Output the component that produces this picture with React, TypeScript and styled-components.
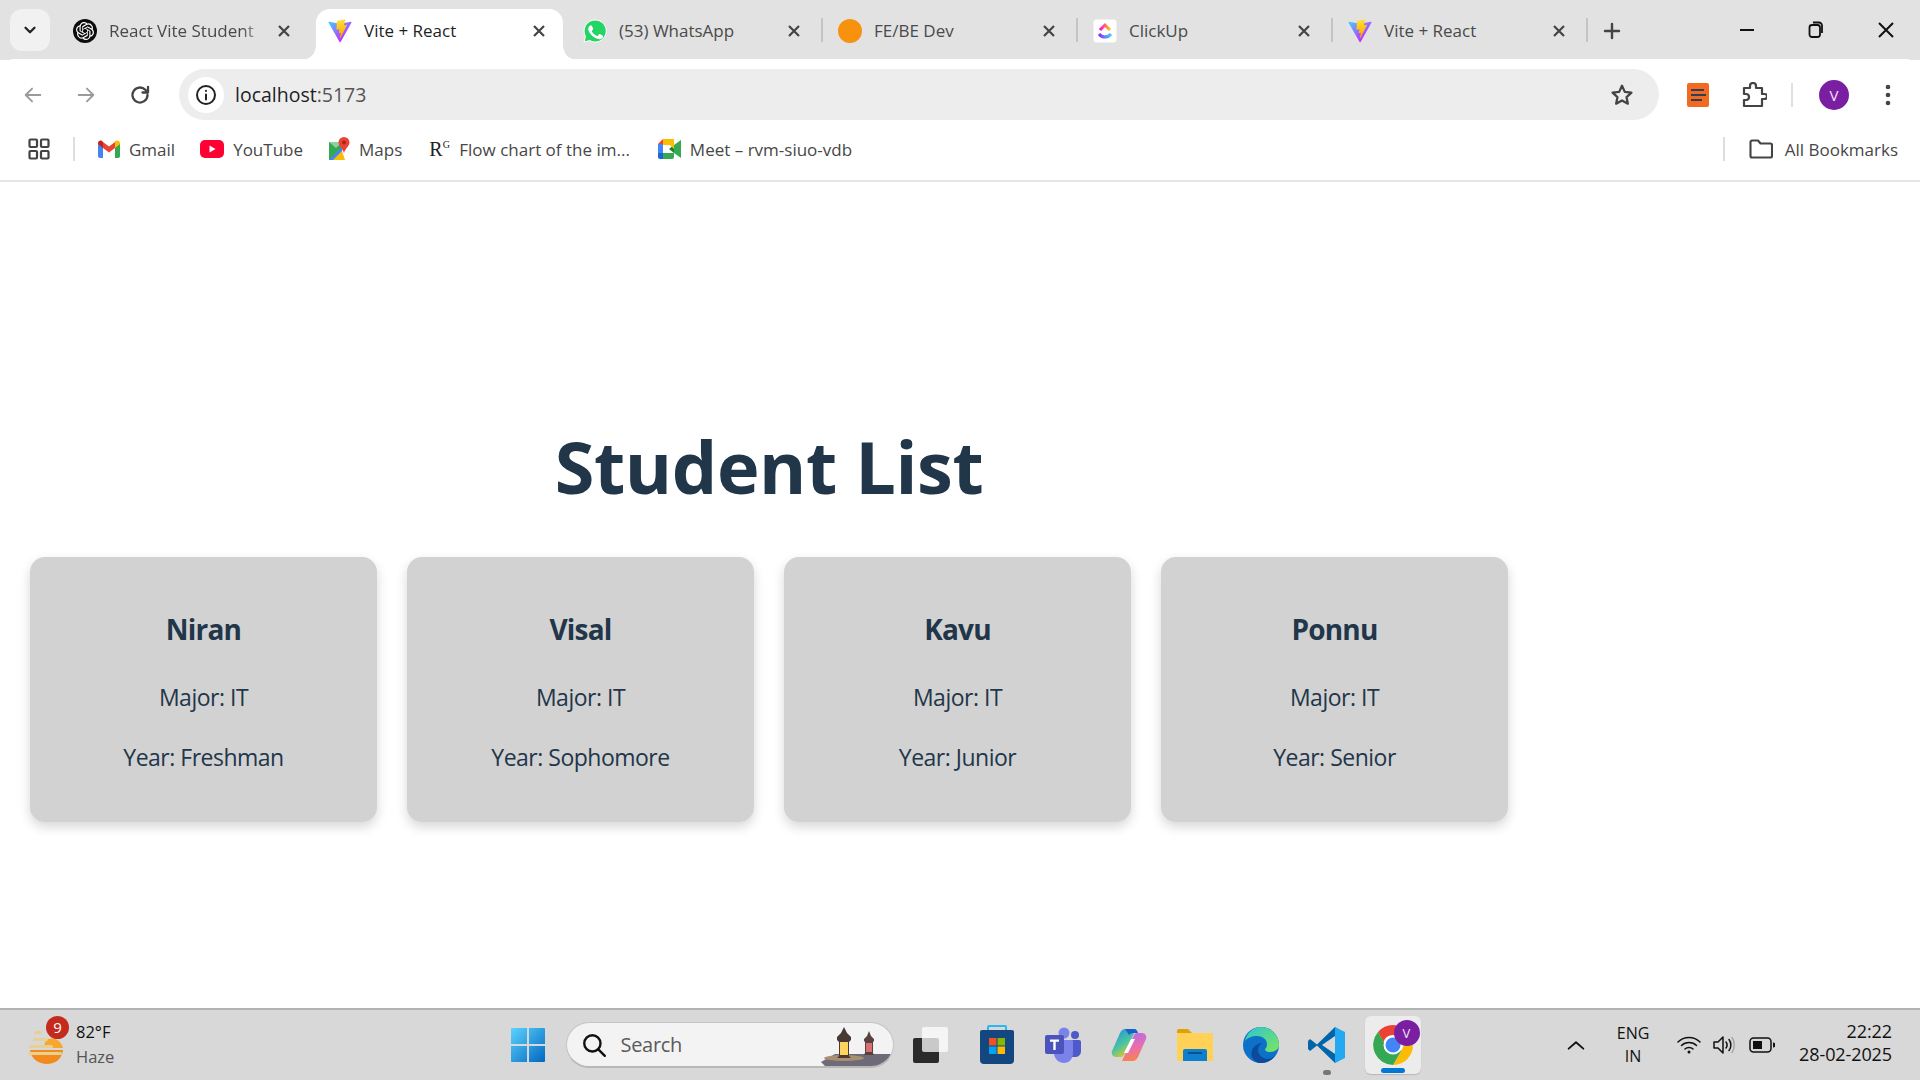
import React from "react";
import styled, { createGlobalStyle } from "styled-components";
import { SiOpenai } from "react-icons/si";

const UI = `"Open Sans", "Noto Sans", "Liberation Sans", sans-serif`;

const Global = createGlobalStyle`
  html, body { margin: 0; padding: 0; width: 1920px; height: 1080px; overflow: hidden; background: #fff; }
  #root { width: 1920px; height: 1080px; }
  * { box-sizing: border-box; }
`;

const Screen = styled.div`
  width: 1920px;
  height: 1080px;
  display: flex;
  flex-direction: column;
  font-family: ${UI};
`;

/* ---------- tab strip ---------- */
const TabStrip = styled.div`
  height: 60px;
  flex: none;
  background: #e2e2e2;
  display: flex;
  align-items: flex-end;
  padding-left: 10px;
`;
const TabMenu = styled.div`
  width: 40px;
  height: 42px;
  margin: 0 0 9px 0;
  border-radius: 12px;
  background: #f1f1f1;
  display: flex;
  align-items: center;
  justify-content: center;
  flex: none;
`;
const TabList = styled.div`
  display: flex;
  align-items: flex-end;
  margin-left: 6px;
`;
const Tab = styled.div<{ $active?: boolean; $sep?: boolean }>`
  position: relative;
  isolation: isolate;
  width: 255px;
  height: 51px;
  flex: none;
  display: flex;
  align-items: center;
  padding: 0 18px 8px 17px;
  gap: 12px;
  font-size: 17px;
  color: ${(p) => (p.$active ? "#1f1f1f" : "#4a4a4a")};
  ${(p) =>
    p.$active
      ? `
    &::before {
      content: ""; position: absolute; z-index: -1; left: 5px; right: 3px; top: 0; bottom: 0;
      background: #fff; border-radius: 14px 14px 0 0;
    }
    &::after {
      content: ""; position: absolute; z-index: -1; left: -9px; right: -11px; bottom: 0; height: 14px;
      background:
        radial-gradient(circle at 0 0, transparent 13.5px, #fff 14px) left bottom / 14px 14px no-repeat,
        radial-gradient(circle at 100% 0, transparent 13.5px, #fff 14px) right bottom / 14px 14px no-repeat;
    }`
      : ""}
  ${(p) =>
    p.$sep
      ? `&::after { content: ""; position: absolute; right: -2px; top: 9px; width: 2px; height: 24px; background: #c4c4c4; }`
      : ""}
`;
const TabTitle = styled.span`
  flex: 1;
  min-width: 0;
  white-space: nowrap;
`;
const FadedTitle = styled(TabTitle)`
  -webkit-mask-image: linear-gradient(to right, #000 86%, rgba(0, 0, 0, 0.25));
  mask-image: linear-gradient(to right, #000 86%, rgba(0, 0, 0, 0.25));
`;
const Favicon = styled.span`
  width: 24px;
  height: 24px;
  flex: none;
  display: flex;
  align-items: center;
  justify-content: center;
`;
const ChatBadge = styled(Favicon)`
  border-radius: 50%;
  background: #0c0c0c;
`;
const NewTab = styled.div`
  width: 24px;
  height: 24px;
  margin: 0 0 17px 14px;
  flex: none;
  display: flex;
`;
const WindowButtons = styled.div`
  margin-left: auto;
  display: flex;
  align-items: center;
  height: 60px;
  padding-right: 25px;
  gap: 53px;
`;

/* ---------- toolbar ---------- */
const Toolbar = styled.div`
  height: 62px;
  flex: none;
  display: flex;
  align-items: center;
  padding: 9px 0 0 22px;
  background: #fff;
  border-radius: 14px 14px 0 0;
  margin-top: -1px;
  position: relative;
`;
const NavButtons = styled.div`
  display: flex;
  align-items: center;
  gap: 31px;
  flex: none;
`;
const Omnibox = styled.div`
  margin-left: 27px;
  width: 1480px;
  height: 51px;
  flex: none;
  border-radius: 26px;
  background: #eeedee;
  display: flex;
  align-items: center;
  padding: 0 24px 0 9px;
`;
const SiteInfo = styled.span`
  width: 36px;
  height: 36px;
  border-radius: 50%;
  background: #fff;
  display: flex;
  align-items: center;
  justify-content: center;
  flex: none;
`;
const Url = styled.span`
  margin-left: 11px;
  flex: 1;
  font-size: 19.5px;
  color: #1f1f1f;
`;
const UrlPort = styled.span`
  color: #555;
`;
const ToolIcons = styled.div`
  display: flex;
  align-items: center;
  margin-left: 27px;
`;
const ToolSep = styled.span`
  width: 2px;
  height: 24px;
  background: #e0e0e0;
  margin: 0 26px 0 24px;
`;
const Avatar = styled.span<{ $size: number; $font: number }>`
  width: ${(p) => p.$size}px;
  height: ${(p) => p.$size}px;
  border-radius: 50%;
  background: #7b1fa2;
  color: #efe3f5;
  font-size: ${(p) => p.$font}px;
  display: flex;
  align-items: center;
  justify-content: center;
  flex: none;
`;

/* ---------- bookmarks ---------- */
const Bookmarks = styled.div`
  height: 61px;
  flex: none;
  display: flex;
  align-items: center;
  padding: 0 22px 3px 28px;
  background: #fff;
  border-bottom: 2px solid #e6e6e6;
`;
const BarSep = styled.span<{ $right: number }>`
  width: 2px;
  height: 24px;
  background: #dedede;
  flex: none;
  margin: 0 ${(p) => p.$right}px 0 23px;
`;
const Mark = styled.span<{ $gap: number; $inner?: number }>`
  display: flex;
  align-items: center;
  gap: ${(p) => p.$inner ?? 9}px;
  margin-right: ${(p) => p.$gap}px;
  font-size: 17px;
  color: #474747;
  white-space: nowrap;
`;
const MarkSpacer = styled.span`
  flex: 1;
`;
const RMark = styled.span`
  font-family: "Liberation Serif", serif;
  font-size: 20px;
  color: #222;
  width: 21px;
  line-height: 1;
  display: block;
  white-space: nowrap;
`;
const RSup = styled.sup`
  font-size: 10px;
  line-height: 0;
`;

/* ---------- page ---------- */
const Page = styled.main`
  flex: 1;
  min-height: 0;
  background: #fff;
  display: flex;
  align-items: center;
`;
const Content = styled.div`
  padding: 30px;
`;
const Title = styled.h1`
  margin: 55px 0 48px;
  font-size: 72px;
  line-height: 86px;
  font-weight: 700;
  text-align: center;
  letter-spacing: -0.4px;
  color: #22364a;
`;
const CardRow = styled.div`
  display: grid;
  grid-template-columns: repeat(4, 347px);
  gap: 30px;
`;
const Card = styled.article`
  height: 265px;
  padding: 24px;
  background: #d2d2d2;
  border-radius: 15px;
  box-shadow: 0 5px 12px rgba(0, 0, 0, 0.16);
  text-align: center;
  color: #22364a;
`;
const Name = styled.h3`
  margin: 30px 0 32px;
  font-size: 28px;
  line-height: 36px;
  font-weight: 700;
  letter-spacing: -0.8px;
`;
const Info = styled.p`
  margin: 0 0 24px;
  font-size: 23px;
  line-height: 36px;
  letter-spacing: -0.5px;
`;

/* ---------- taskbar ---------- */
const Taskbar = styled.footer`
  height: 72px;
  flex: none;
  background: #d8d8d8;
  border-top: 2px solid #b2b2b2;
  display: grid;
  grid-template-columns: 1fr auto 1fr;
  align-items: center;
`;
const Weather = styled.div`
  display: flex;
  align-items: center;
  padding-left: 28px;
  position: relative;
`;
const WeatherIcon = styled.div`
  width: 36px;
  height: 44px;
  flex: none;
  margin-top: 4px;
`;
const Badge = styled.span`
  position: absolute;
  left: 46px;
  top: -3px;
  width: 23px;
  height: 23px;
  border-radius: 50%;
  background: #c42b1c;
  color: #fff;
  font-size: 15px;
  display: flex;
  align-items: center;
  justify-content: center;
`;
const WeatherText = styled.div`
  margin-left: 12px;
  padding-bottom: 3px;
  font-size: 16.5px;
  line-height: 25px;
  color: #111;
`;
const Muted = styled.div`
  color: #555;
`;
const Center = styled.div`
  display: flex;
  align-items: center;
  padding-left: 15px;
`;
const WinLogo = styled.div`
  width: 36px;
  height: 36px;
  margin-right: 20px;
`;
const SearchBox = styled.div`
  width: 328px;
  height: 46px;
  border-radius: 23px;
  background: #f3f3f3;
  border: 1px solid #c4c4c4;
  border-bottom: 2px solid #b8b8b8;
  display: flex;
  align-items: center;
  padding-left: 14px;
  gap: 14px;
  font-size: 20px;
  letter-spacing: -0.3px;
  color: #5a5a5a;
  position: relative;
  overflow: hidden;
`;
const SearchArt = styled.span`
  position: absolute;
  right: 0;
  bottom: 0;
  display: flex;
`;
const AppIcons = styled.div`
  display: flex;
  margin-left: 4px;
`;
const AppSlot = styled.div<{ $active?: boolean }>`
  width: 66px;
  height: 58px;
  display: flex;
  align-items: center;
  justify-content: center;
  position: relative;
  border-radius: 6px;
  ${(p) =>
    p.$active
      ? `background: #ececec; width: 56px; margin: 0 5px; box-shadow: 0 1px 1px #b8b8b8;`
      : ""}
`;
const RunDot = styled.span`
  position: absolute;
  bottom: -1px;
  left: 50%;
  margin-left: -4px;
  width: 8px;
  height: 5px;
  border-radius: 3px;
  background: #777;
`;
const ActiveBar = styled.span`
  position: absolute;
  bottom: 1px;
  left: 50%;
  margin-left: -12px;
  width: 24px;
  height: 5px;
  border-radius: 3px;
  background: #0078d4;
`;
const AvatarBadge = styled.span`
  position: absolute;
  top: 4px;
  right: 1px;
`;
const Tray = styled.div`
  display: flex;
  align-items: center;
  justify-content: flex-end;
  padding-right: 28px;
  color: #111;
`;
const TrayLang = styled.div`
  width: 44px;
  margin: 0 22px 0 24px;
  text-align: center;
  font-size: 16px;
  line-height: 23px;
`;
const TrayIcons = styled.div`
  display: flex;
  align-items: center;
  gap: 12px;
`;
const Clock = styled.div`
  margin-left: 24px;
  padding-bottom: 4px;
  text-align: right;
  font-size: 18px;
  line-height: 23px;
  letter-spacing: -0.1px;
`;

/* ---------- icons ---------- */
const Stroke = ({ s, w = 2, c = "#444", children }: { s: number; w?: number; c?: string; children: React.ReactNode }) => (
  <svg width={s} height={s} viewBox="0 0 24 24" fill="none" stroke={c} strokeWidth={w} strokeLinecap="round" strokeLinejoin="round">
    {children}
  </svg>
);
const Close = ({ s = 18 }: { s?: number }) => (
  <svg width={s} height={s} viewBox="0 0 18 18" fill="none" stroke="#444" strokeWidth="2.2" style={{ flex: "none" }}>
    <path d="M4 4l10 10M14 4L4 14" />
  </svg>
);
const Vite = () => (
  <svg width="26" height="26" viewBox="0 0 410 404">
    <defs>
      <linearGradient id="vg1" x1="6" y1="33" x2="235" y2="344" gradientUnits="userSpaceOnUse">
        <stop offset="0" stopColor="#41d1ff" />
        <stop offset="1" stopColor="#bd34fe" />
      </linearGradient>
      <linearGradient id="vg2" x1="194" y1="8" x2="236" y2="292" gradientUnits="userSpaceOnUse">
        <stop offset="0" stopColor="#ffea83" />
        <stop offset="0.08" stopColor="#ffdd35" />
        <stop offset="1" stopColor="#ffa800" />
      </linearGradient>
    </defs>
    <path d="M399.641 59.5246L215.643 388.545C211.844 395.338 202.084 395.378 198.228 388.618L10.5817 59.5563C6.38087 52.1896 12.6802 43.2665 21.0281 44.7586L205.223 77.6824C206.398 77.8924 207.601 77.8904 208.776 77.6763L389.119 44.8058C397.439 43.2894 403.768 52.1434 399.641 59.5246Z" fill="url(#vg1)" />
    <path d="M292.965 1.5744L156.801 28.2552C154.563 28.6937 152.906 30.5903 152.771 32.8664L144.395 174.33C144.198 177.662 147.258 180.248 150.51 179.498L188.42 170.749C191.967 169.931 195.172 173.055 194.443 176.622L183.18 231.775C182.422 235.487 185.907 238.661 189.532 237.56L212.947 230.446C216.577 229.344 220.065 232.527 219.297 236.242L201.398 322.875C200.278 328.294 207.486 331.249 210.492 326.603L212.5 323.5L323.454 102.072C325.312 98.3645 322.108 94.137 318.036 94.9228L279.014 102.454C275.347 103.161 272.227 99.746 273.262 96.1583L298.731 7.86689C299.767 4.27314 296.636 0.855181 292.965 1.5744Z" fill="url(#vg2)" />
  </svg>
);
const WhatsApp = () => (
  <svg width="24" height="24" viewBox="0 0 24 24">
    <path d="M12 1a11 11 0 0 0-9.500 16.500L1 23l5.700-1.500A11 11 0 1 0 12 1z" fill="#25d366" stroke="#fff" strokeWidth="1" />
    <path d="M9 7c-.3-.6-.5-.6-.8-.6h-.7c-.3 0-.7.100-1 .5-.4.400-1.300 1.300-1.300 3.100s1.300 3.500 1.500 3.800c.2.200 2.600 4.100 6.300 5.500 3.100 1.200 3.800 1 4.400.9.700-.1 2.200-.9 2.500-1.700.3-.9.300-1.600.2-1.700-.1-.2-.3-.3-.7-.4l-2.600-1.300c-.3-.1-.6-.2-.8.200l-1.200 1.500c-.2.200-.4.300-.8.100-.4-.2-1.600-.6-3-1.900-1.100-1-1.900-2.200-2.100-2.600-.2-.4 0-.6.200-.8l.6-.7c.2-.2.200-.4.400-.6.100-.300 0-.5 0-.7z" fill="#fff" />
  </svg>
);
const ClickUp = () => (
  <svg width="24" height="24" viewBox="0 0 24 24">
    <defs>
      <linearGradient id="cu1" x1="0" y1="0" x2="1" y2="0">
        <stop offset="0" stopColor="#ff02f0" />
        <stop offset="1" stopColor="#ffc800" />
      </linearGradient>
      <linearGradient id="cu2" x1="0" y1="0" x2="1" y2="0">
        <stop offset="0" stopColor="#8930fd" />
        <stop offset="1" stopColor="#49ccf9" />
      </linearGradient>
    </defs>
    <rect x="0.5" y="0.5" width="23" height="23" rx="3" fill="#fff" />
    <path d="M7 11l5-5 5 5" fill="none" stroke="url(#cu1)" strokeWidth="3" />
    <path d="M6 15c3 4 9 4 12 0" fill="none" stroke="url(#cu2)" strokeWidth="3" />
  </svg>
);
const Gmail = () => (
  <svg width="22" height="18" viewBox="0 0 22 18">
    <path d="M0 3v13a2 2 0 0 0 2 2h3V7z" fill="#4285f4" />
    <path d="M22 3v13a2 2 0 0 1-2 2h-3V7z" fill="#34a853" />
    <path d="M17 1v7l5-4V3c0-2-2.500-3-4-2z" fill="#fbbc04" />
    <path d="M5 8V2l6 4.500L17 2v6l-6 4.500z" fill="#ea4335" />
    <path d="M0 4V3c0-2 2.500-3 4-2l1 1v6z" fill="#c5221f" />
  </svg>
);
const YouTube = () => (
  <svg width="24" height="18" viewBox="0 0 24 18">
    <rect width="24" height="18" rx="5" fill="#ff0033" />
    <path d="M9.500 5.500v7l6-3.500z" fill="#fff" />
  </svg>
);
const Maps = () => (
  <svg width="22" height="24" viewBox="0 0 22 24">
    <path d="M1 5h13v18H1z" fill="#34a853" />
    <path d="M1 23L14 10v13z" fill="#4285f4" />
    <path d="M1 5l13 0-6 6z" fill="#8fd19e" />
    <path d="M5 23l9-9 3 9z" fill="#fbbc04" />
    <path d="M16 0a5.500 5.500 0 0 1 5.500 5.500C21.500 9 17 12 16 16c-1-4-5.500-7-5.500-10.500A5.500 5.500 0 0 1 16 0z" fill="#ea4335" />
    <circle cx="16" cy="5.500" r="2" fill="#a52714" />
  </svg>
);
const Meet = () => (
  <svg width="23" height="20" viewBox="0 0 23 20">
    <path d="M5 0h11v6H5z" fill="#fbbc04" />
    <path d="M5 0L0 5h5z" fill="#ea4335" />
    <path d="M0 5h5v9H0z" fill="#4285f4" />
    <path d="M0 14h5v6H2a2 2 0 0 1-2-2z" fill="#1967d2" />
    <path d="M5 14h11v4a2 2 0 0 1-2 2H5z" fill="#34a853" />
    <path d="M16 6l7-5v18l-7-5z" fill="#34a853" />
    <path d="M11 10l5-4v8z" fill="#188038" />
    <path d="M12 6h4v4z" fill="#fbbc04" />
  </svg>
);
const WeatherArt = () => (
  <svg width="36" height="44" viewBox="0 0 36 44">
    <path d="M2 25h33c-1 9-8 14-16 14S3 34 2 25z" fill="#f28a1c" />
    <path d="M20 14c6-2 13 1 15 9H16c0-4 1-7 4-9z" fill="#f6a72c" />
    <g fill="#e8cf92">
      <rect x="6" y="6" width="8" height="3" rx="1.500" />
      <rect x="5" y="13" width="15" height="3" rx="1.500" />
      <rect x="1" y="20" width="24" height="3" rx="1.500" />
      <rect x="0" y="27" width="34" height="3" rx="1.500" />
    </g>
  </svg>
);
const Windows = () => (
  <svg width="36" height="36" viewBox="0 0 36 36">
    <defs>
      <linearGradient id="wg" x1="0" y1="0" x2="1" y2="1">
        <stop offset="0" stopColor="#5dd3ff" />
        <stop offset="1" stopColor="#0067c0" />
      </linearGradient>
    </defs>
    <path d="M1 2a1 1 0 0 1 1-1h15v16H1zM19 1h15a1 1 0 0 1 1 1v15H19zM1 19h16v16H2a1 1 0 0 1-1-1zM19 19h16v15a1 1 0 0 1-1 1H19z" fill="url(#wg)" />
  </svg>
);
const Lanterns = () => (
  <svg width="74" height="44" viewBox="0 0 74 44">
    <path d="M2 40l14-8h58v1c-2 5-5 9-9 11H6z" fill="#6f6a78" />
    <ellipse cx="25" cy="36" rx="20" ry="3" fill="#a89070" />
    <path d="M25 5l3 6 4 4v3l-2 2v14l2 2H18l2-2V20l-2-2v-3l4-4z" fill="#463a33" />
    <rect x="21" y="20" width="8" height="13" fill="#ffd45c" />
    <path d="M50 9l2 5 3 3v2l-1 1v11l1 2H45l1-2V20l-1-1v-2l3-3z" fill="#5b4040" />
    <rect x="47" y="21" width="6" height="9" fill="#d97070" />
  </svg>
);
const TaskView = () => (
  <svg width="36" height="36" viewBox="0 0 36 36">
    <rect x="0" y="11" width="26" height="25" rx="2" fill="#2a2a2a" />
    <rect x="9" y="0" width="26" height="25" rx="2" fill="#ffffff" opacity="0.75" />
  </svg>
);
const Store = () => (
  <svg width="36" height="40" viewBox="0 0 36 40">
    <path d="M9 6V2a1 1 0 0 1 1-1h16a1 1 0 0 1 1 1v4" fill="none" stroke="#2bb7ef" strokeWidth="2" />
    <path d="M3 5h30a2 2 0 0 1 2 2v28a4 4 0 0 1-4 4H5a4 4 0 0 1-4-4V7a2 2 0 0 1 2-2z" fill="#14477f" />
    <rect x="10" y="13" width="7.500" height="7.500" fill="#f25022" />
    <rect x="18.500" y="13" width="7.500" height="7.500" fill="#7fba00" />
    <rect x="10" y="21.500" width="7.500" height="7.500" fill="#00a4ef" />
    <rect x="18.500" y="21.500" width="7.500" height="7.500" fill="#ffb900" />
  </svg>
);
const Teams = () => (
  <svg width="36" height="36" viewBox="0 0 36 36">
    <circle cx="19" cy="6" r="5.500" fill="#7b83eb" />
    <circle cx="30" cy="8" r="4" fill="#5059c9" />
    <path d="M24 13h10a2 2 0 0 1 2 2v9c0 4-3 6-6 6h-6z" fill="#5059c9" />
    <path d="M9 13h18a1 1 0 0 1 1 1v12c0 6-4 10-9 10s-10-4-10-10z" fill="#7b83eb" />
    <rect x="0" y="8" width="19" height="19" rx="2" fill="#4b53bc" />
    <path d="M5 12.500h9v2.200h-3.300V23H8.300v-8.300H5z" fill="#fff" />
  </svg>
);
const Copilot = () => (
  <svg width="36" height="36" viewBox="0 0 36 36">
    <defs>
      <linearGradient id="cp1" x1="0" y1="0" x2="0.6" y2="1">
        <stop offset="0" stopColor="#1b8fe8" />
        <stop offset="0.6" stopColor="#4dc4a0" />
        <stop offset="1" stopColor="#f2c613" />
      </linearGradient>
      <linearGradient id="cp2" x1="0.4" y1="0" x2="0.6" y2="1">
        <stop offset="0" stopColor="#b76ce8" />
        <stop offset="0.6" stopColor="#f06fa0" />
        <stop offset="1" stopColor="#f5873f" />
      </linearGradient>
    </defs>
    <path d="M14 2h11L13 28c-1 2-3 2-5 2H5c-3 0-5-3-4-6L9 6c1-2 3-4 5-4z" fill="url(#cp1)" />
    <path d="M22 34H11l12-26c1-2 3-2 5-2h3c3 0 5 3 4 6l-8 18c-1 2-3 4-5 4z" fill="url(#cp2)" />
    <path d="M14 2h9c2 0 3 1 4 4H22c-2 0-3 1-4 2z" fill="#1a5fd0" />
    <path d="M20 12h4l-7 14h-4z" fill="#fff" />
  </svg>
);
const Folder = () => (
  <svg width="36" height="32" viewBox="0 0 36 32">
    <path d="M0 2a2 2 0 0 1 2-2h9l4 4h20v4H0z" fill="#e0a106" />
    <path d="M0 4h35a1 1 0 0 1 1 1v27H0z" fill="#ffd257" />
    <path d="M6 32V22a2 2 0 0 1 2-2h20a2 2 0 0 1 2 2v10z" fill="#0f7fd0" />
    <rect x="11" y="23" width="14" height="2" fill="#06508f" />
  </svg>
);
const Edge = () => (
  <svg width="36" height="36" viewBox="0 0 36 36">
    <defs>
      <linearGradient id="eg1" x1="0" y1="0" x2="1" y2="1">
        <stop offset="0" stopColor="#2cc5d2" />
        <stop offset="1" stopColor="#7de65c" />
      </linearGradient>
    </defs>
    <circle cx="18" cy="18" r="18" fill="#0c72c9" />
    <path d="M2 14C4 5 11 0 18 0c10 0 18 8 18 18 0 4-4 7-9 7-4 0-5-2-5-3 1-1 2-2 2-5 0-5-5-8-10-8-5 0-10 2-12 5z" fill="url(#eg1)" />
    <path d="M33 27c-3 6-9 9-15 9-4 0-7-2-9-6-2-5 1-13 10-14-3 2-4 5-4 7 0 5 5 9 10 9 3 0 6-2 8-5z" fill="#0e4a9c" />
  </svg>
);
const VSCode = () => (
  <svg width="38" height="38" viewBox="0 0 38 38">
    <path d="M27 1L9 18.500 2 13 0 15v8l2 2 7-5.500L27 37l3-2V3z" fill="#0065a9" />
    <path d="M27 10L14 19l13 9z" fill="#d8d8d8" />
    <path d="M27 1l10 5v26l-10 5z" fill="#23a9f2" />
  </svg>
);
const Chrome = () => (
  <svg width="40" height="40" viewBox="0 0 40 40">
    <path d="M20 0a20 20 0 0 1 17.300 10H20a10 10 0 0 0-9.500 7L5 7a20 20 0 0 1 15-7z" fill="#ea4335" />
    <path d="M37.300 10A20 20 0 0 1 20 40l8.700-15A10 10 0 0 0 28 12z" fill="#fbbc04" />
    <path d="M5 7l9 16a10 10 0 0 0 14.700 2L20 40A20 20 0 0 1 5 7z" fill="#34a853" />
    <circle cx="20" cy="20" r="9.500" fill="#fff" />
    <circle cx="20" cy="20" r="7.500" fill="#4285f4" />
  </svg>
);

const students = [
  { name: "Niran", year: "Freshman" },
  { name: "Visal", year: "Sophomore" },
  { name: "Kavu", year: "Junior" },
  { name: "Ponnu", year: "Senior" },
];

export default function App() {
  return (
    <Screen>
      <Global />
      <TabStrip>
        <TabMenu>
          <Stroke s={18} w={3} c="#222"><path d="M6 9l6 6 6-6" /></Stroke>
        </TabMenu>
        <TabList>
          <Tab>
            <ChatBadge><SiOpenai size={18} color="#fff" /></ChatBadge>
            <FadedTitle>React Vite Student</FadedTitle>
            <Close />
          </Tab>
          <Tab $active>
            <Favicon><Vite /></Favicon>
            <TabTitle>Vite + React</TabTitle>
            <Close />
          </Tab>
          <Tab $sep>
            <Favicon><WhatsApp /></Favicon>
            <TabTitle>(53) WhatsApp</TabTitle>
            <Close />
          </Tab>
          <Tab $sep>
            <Favicon>
              <svg width="24" height="24" viewBox="0 0 24 24"><circle cx="12" cy="12" r="12" fill="#f7920f" /></svg>
            </Favicon>
            <TabTitle>FE/BE Dev</TabTitle>
            <Close />
          </Tab>
          <Tab $sep>
            <Favicon><ClickUp /></Favicon>
            <TabTitle>ClickUp</TabTitle>
            <Close />
          </Tab>
          <Tab $sep>
            <Favicon><Vite /></Favicon>
            <TabTitle>Vite + React</TabTitle>
            <Close />
          </Tab>
        </TabList>
        <NewTab>
          <Stroke s={24} w={2.4} c="#444"><path d="M12 5v14M5 12h14" /></Stroke>
        </NewTab>
        <WindowButtons>
          <svg width="16" height="16" viewBox="0 0 16 16"><path d="M1 8h14" stroke="#111" strokeWidth="2" /></svg>
          <svg width="16" height="18" viewBox="0 0 16 18" fill="none" stroke="#111" strokeWidth="1.800"><rect x="1.500" y="4" width="10.500" height="12" rx="2.500" /><path d="M5 1.500h6a3 3 0 0 1 3 3V12" /></svg>
          <svg width="18" height="18" viewBox="0 0 18 18"><path d="M2 2l14 14M16 2L2 16" stroke="#111" strokeWidth="2" /></svg>
        </WindowButtons>
      </TabStrip>

      <Toolbar>
        <NavButtons>
          <Stroke s={22} c="#9a9a9a"><path d="M20 12H4M11 5l-7 7 7 7" /></Stroke>
          <Stroke s={22} c="#9a9a9a"><path d="M4 12h16M13 5l7 7-7 7" /></Stroke>
          <Stroke s={24} w={2.300} c="#444"><path d="M19.500 12a7.500 7.500 0 1 1-2.200-5.300L20 9.500M20 4v5.500h-5.500" /></Stroke>
        </NavButtons>
        <Omnibox>
          <SiteInfo>
            <Stroke s={24} w={2} c="#222"><circle cx="12" cy="12" r="9" /><path d="M12 11.500v5M12 7.800v.2" /></Stroke>
          </SiteInfo>
          <Url>localhost<UrlPort>:5173</UrlPort></Url>
          <Stroke s={26} w={2.100} c="#444"><path d="M12 3.500l2.600 5.600 6.100.7-4.500 4.200 1.200 6-5.400-3-5.400 3 1.200-6L3.300 9.800l6.100-.7z" /></Stroke>
        </Omnibox>
        <ToolIcons>
          <svg width="22" height="24" viewBox="0 0 22 24" style={{ marginLeft: 1 }}>
            <rect width="22" height="24" rx="2" fill="#f26a21" />
            <path d="M4 7h13M4 12h15M4 17h11" stroke="#2f3e52" strokeWidth="2" />
          </svg>
          <svg width="26" height="26" viewBox="0 0 26 26" fill="none" stroke="#444" strokeWidth="2.200" strokeLinejoin="round" style={{ marginLeft: 32 }}>
            <path d="M3 6h6V4a3 3 0 0 1 6 0v2h6v6h2.500a2 2 0 0 1 0 5H21v7H3v-6h2a3 3 0 0 0 0-6H3z" />
          </svg>
          <ToolSep />
          <Avatar $size={30} $font={15}>V</Avatar>
          <svg width="6" height="22" viewBox="0 0 6 22" fill="#444" style={{ marginLeft: 36 }}>
            <circle cx="3" cy="3" r="2.300" /><circle cx="3" cy="11" r="2.300" /><circle cx="3" cy="19" r="2.300" />
          </svg>
        </ToolIcons>
      </Toolbar>

      <Bookmarks>
        <svg width="22" height="22" viewBox="0 0 22 22" fill="none" stroke="#444" strokeWidth="2.200" style={{ flex: "none" }}>
          <rect x="1.500" y="1.500" width="7.500" height="7.500" rx="1" />
          <rect x="13" y="1.500" width="7.500" height="7.500" rx="1" />
          <rect x="1.500" y="13" width="7.500" height="7.500" rx="1" />
          <rect x="13" y="13" width="7.500" height="7.500" rx="1" />
        </svg>
        <BarSep $right={23} />
        <Mark $gap={25}><Gmail />Gmail</Mark>
        <Mark $gap={25}><YouTube />YouTube</Mark>
        <Mark $gap={27}><Maps />Maps</Mark>
        <Mark $gap={28}><RMark>R<RSup>G</RSup></RMark>Flow chart of the im...</Mark>
        <Mark $gap={0}><Meet />Meet – rvm-siuo-vdb</Mark>
        <MarkSpacer />
        <BarSep $right={24} />
        <Mark $gap={0} $inner={12}>
          <svg width="24" height="22" viewBox="0 0 24 22" fill="none" stroke="#444" strokeWidth="2.100" strokeLinejoin="round">
            <path d="M1.500 4a1.500 1.500 0 0 1 1.500-1.500h6l2.500 3h10A1.500 1.500 0 0 1 23 7v11a1.500 1.500 0 0 1-1.500 1.500H3A1.500 1.500 0 0 1 1.500 18z" />
          </svg>
          All Bookmarks
        </Mark>
      </Bookmarks>

      <Page>
        <Content>
          <Title>Student List</Title>
          <CardRow>
            {students.map((s) => (
              <Card key={s.name}>
                <Name>{s.name}</Name>
                <Info>Major: IT</Info>
                <Info>Year: {s.year}</Info>
              </Card>
            ))}
          </CardRow>
        </Content>
      </Page>

      <Taskbar>
        <Weather>
          <WeatherIcon><WeatherArt /></WeatherIcon>
          <Badge>9</Badge>
          <WeatherText>
            82°F
            <Muted>Haze</Muted>
          </WeatherText>
        </Weather>
        <Center>
          <WinLogo><Windows /></WinLogo>
          <SearchBox>
            <Stroke s={26} w={2.200} c="#111"><circle cx="10.500" cy="10.500" r="7.500" /><path d="M16 16l6 6" /></Stroke>
            Search
            <SearchArt><Lanterns /></SearchArt>
          </SearchBox>
          <AppIcons>
            <AppSlot><TaskView /></AppSlot>
            <AppSlot><Store /></AppSlot>
            <AppSlot><Teams /></AppSlot>
            <AppSlot><Copilot /></AppSlot>
            <AppSlot><Folder /></AppSlot>
            <AppSlot><Edge /></AppSlot>
            <AppSlot><VSCode /><RunDot /></AppSlot>
            <AppSlot $active>
              <Chrome />
              <AvatarBadge><Avatar $size={26} $font={13}>V</Avatar></AvatarBadge>
              <ActiveBar />
            </AppSlot>
          </AppIcons>
        </Center>
        <Tray>
          <Stroke s={22} w={2} c="#111"><path d="M4 16l8-7 8 7" /></Stroke>
          <TrayLang>ENG<br />IN</TrayLang>
          <TrayIcons>
            <svg width="24" height="20" viewBox="0 0 24 20" fill="none" stroke="#111" strokeWidth="1.500" strokeLinecap="round">
              <path d="M1 7c6-6 16-6 22 0M4.500 10.500c4-4 11-4 15 0M8 14c2-2 6-2 8 0" />
              <circle cx="12" cy="17" r="1.500" fill="#111" stroke="none" />
            </svg>
            <svg width="22" height="20" viewBox="0 0 22 20" fill="none" stroke="#111" strokeWidth="1.500" strokeLinejoin="round" strokeLinecap="round">
              <path d="M1 7h4l5-5v16l-5-5H1z" />
              <path d="M13 7c1.500 2 1.500 4 0 6M16 4.500c2.500 3 2.500 8 0 11" />
              <path d="M19 2.500c3 4 3 11 0 15" stroke="#a8a8a8" />
            </svg>
            <svg width="26" height="16" viewBox="0 0 26 16" fill="none" stroke="#111" strokeWidth="1.500" style={{ marginLeft: 2 }}>
              <rect x="1" y="1" width="21" height="14" rx="3.500" />
              <rect x="4" y="4" width="9" height="8" fill="#111" stroke="none" />
              <path d="M24 5.500a2.500 2.500 0 0 1 0 5z" fill="#111" stroke="none" />
            </svg>
          </TrayIcons>
          <Clock>22:22<br />28-02-2025</Clock>
        </Tray>
      </Taskbar>
    </Screen>
  );
}
